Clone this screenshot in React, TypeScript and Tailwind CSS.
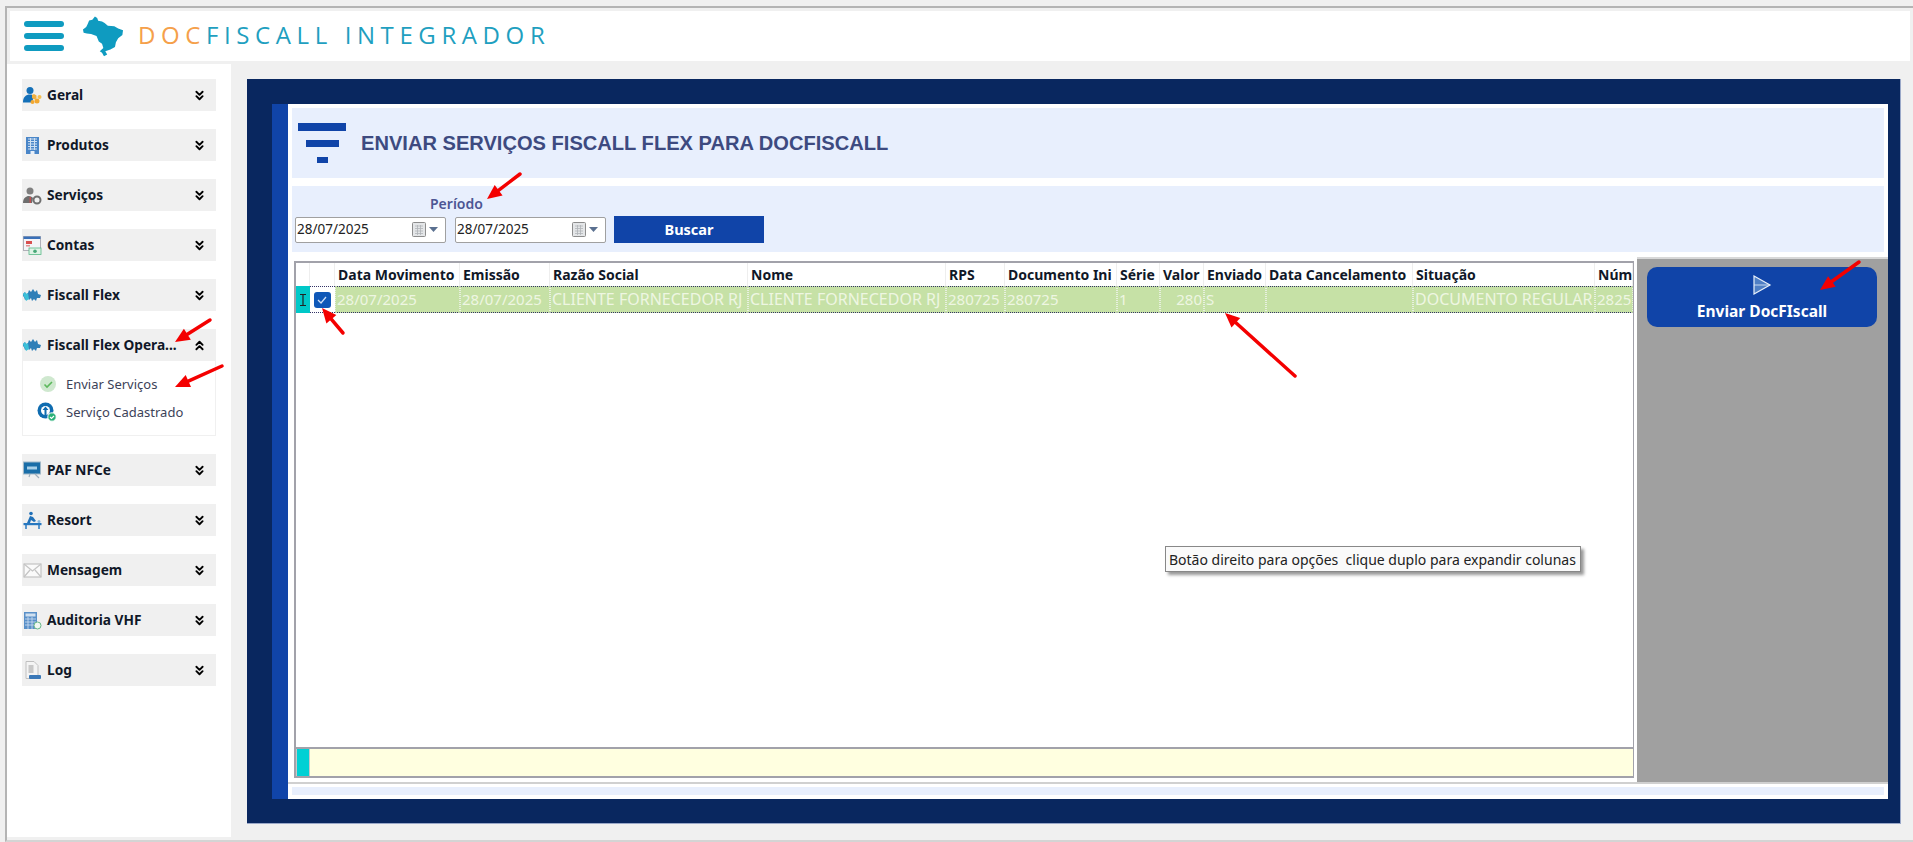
import { ChevronsDown, ChevronsUp } from "lucide-react";
import type { ReactNode } from "react";

const labelFont = "font-['Noto_Sans',sans-serif]";

function GeralIcon() {
  return (
    <svg width="19" height="19" viewBox="0 0 19 19">
      <circle cx="7" cy="4.5" r="3.5" fill="#1470b8" />
      <path d="M0 16c0-5 3-7.5 7-7.5 2 0 3 .5 4 1.5l-2 6.500H0z" fill="#1470b8" />
      <path d="M11 8l2.500 1.500v3l-2.500 1-2-1.500 0-3z" fill="#f0b040" />
      <circle cx="14" cy="15" r="2.500" fill="#f2a830" />
      <circle cx="9.500" cy="16" r="2" fill="#f2a830" />
      <circle cx="16.500" cy="11" r="2" fill="#f6c050" />
    </svg>
  );
}

function ProdutosIcon() {
  return (
    <svg width="19" height="19" viewBox="0 0 19 19">
      <rect x="3" y="1" width="13" height="17" fill="#4a86c8" />
      <path d="M5 3h9M5 5.500h9M5 8h9M5 10.500h9M5 13h9M7.500 2v12M11.500 2v12" stroke="#cfe0f2" strokeWidth="1" />
      <rect x="7.500" y="15" width="4" height="3" fill="#e8f0fa" />
    </svg>
  );
}

function ServicosIcon() {
  return (
    <svg width="19" height="19" viewBox="0 0 19 19">
      <circle cx="7" cy="5" r="3.500" fill="#808080" />
      <path d="M0 17c0-5 3-7 6-7 2 0 3 1 4 2l-1 5H0z" fill="#6e6e6e" />
      <rect x="6.500" y="11" width="1.500" height="6" fill="#c05050" />
      <circle cx="14" cy="14" r="3.500" fill="none" stroke="#707070" strokeWidth="2" />
    </svg>
  );
}

function ContasIcon() {
  return (
    <svg width="19" height="19" viewBox="0 0 19 19">
      <rect x="0.500" y="0.500" width="17" height="14" fill="#f4f4f8" stroke="#b0b0b8" />
      <rect x="0.500" y="0.500" width="17" height="2.500" fill="#3a70b8" />
      <rect x="3" y="5" width="6" height="3" fill="#d85050" />
      <rect x="3" y="9" width="4" height="1.500" fill="#e09090" />
      <rect x="6" y="12" width="12" height="6.500" fill="#dff3e6" stroke="#58b888" strokeWidth="0.800" />
      <circle cx="12" cy="15.200" r="1.800" fill="#48a878" />
    </svg>
  );
}

function PuzzleIcon() {
  return (
    <svg width="19" height="19" viewBox="0 0 19 19">
      <path d="M0 8l2-2 1 2 2-1 1-3 2 2 2-3 2 3 2-2 1 4 3 1-1 3-3 0-1 3-2-2-2 2-1-3-2 2-1-2-3 2-1-3-1-1z" fill="#2f7fb8" />
      <path d="M0 8l2-2 1 2 2-1 1 6-3 2-1-3-1-1z" fill="#3cc0d8" />
    </svg>
  );
}

function PafIcon() {
  return (
    <svg width="19" height="19" viewBox="0 0 19 19">
      <rect x="0.500" y="1" width="17" height="12" fill="#1a6ea8" stroke="#a0b8c8" />
      <rect x="4" y="5.500" width="10" height="3" fill="#a8d0e8" />
      <path d="M7 13l-1 3M12 13l4 4" stroke="#a0b0bc" strokeWidth="1.200" />
    </svg>
  );
}

function ResortIcon() {
  return (
    <svg width="19" height="19" viewBox="0 0 19 19">
      <circle cx="8" cy="2.500" r="1.800" fill="#2070b8" />
      <path d="M7 5l3 1 3 4-2 1-3-2-1 3H4z" fill="#2070b8" />
      <rect x="0.500" y="12" width="18" height="2.200" fill="#2878c0" />
      <path d="M3 14v4M16 14v4" stroke="#2878c0" strokeWidth="1.500" />
      <circle cx="16" cy="10.500" r="1.500" fill="#88b8e0" />
    </svg>
  );
}

function MensagemIcon() {
  return (
    <svg width="19" height="19" viewBox="0 0 19 19">
      <rect x="1" y="3" width="17" height="13" fill="#fafafa" stroke="#c4c4c4" strokeWidth="1.200" />
      <path d="M1 3l8.500 7L18 3M1 16l6-7M18 16l-6-7" fill="none" stroke="#c4c4c4" strokeWidth="1.200" />
    </svg>
  );
}

function AuditoriaIcon() {
  return (
    <svg width="19" height="19" viewBox="0 0 19 19">
      <rect x="1" y="1" width="13" height="17" fill="#5a90c8" />
      <rect x="2.500" y="2.500" width="10" height="3" fill="#d0e0f0" />
      <path d="M2 8h11M2 11h11M2 14h11M5 6v12M9 6v12" stroke="#cfe0f2" strokeWidth="0.800" />
      <circle cx="14.500" cy="14.500" r="3.500" fill="#f0f8f2" stroke="#68b888" strokeWidth="1" />
    </svg>
  );
}

function LogIcon() {
  return (
    <svg width="19" height="19" viewBox="0 0 19 19">
      <path d="M3 0.500h8l4 4v13H3z" fill="#f4f4f4" stroke="#c0c0c0" />
      <path d="M5.500 4h5v8h-5z" fill="#c8c8c8" />
      <rect x="6" y="14" width="12" height="4" rx="1" fill="#3a78b8" />
    </svg>
  );
}

function MenuItem({ icon, label, open }: { icon: ReactNode; label: string; open?: boolean }) {
  return (
    <div className="flex h-[32px] items-center bg-[#f0f0f0] pl-px pr-[9px]">
      <span className="flex w-[24px] shrink-0 items-center">{icon}</span>
      <span className={`${labelFont} flex-1 whitespace-nowrap text-[13.700px] font-bold text-[#101828]`}>{label}</span>
      {open ? (
        <ChevronsUp size={15} strokeWidth={3} className="text-black" />
      ) : (
        <ChevronsDown size={15} strokeWidth={3} className="text-black" />
      )}
    </div>
  );
}

function DateInput() {
  return (
    <div className="flex h-[26px] w-[151px] items-center rounded-[2px] border border-[#a0a0a0] bg-white pl-px pr-[7px]">
      <span className={`${labelFont} flex-1 text-[13.500px] text-[#222]`}>28/07/2025</span>
      <svg width="15" height="16" viewBox="0 0 15 16">
        <rect x="0.500" y="0.500" width="13" height="14" rx="1" fill="#e4e6e8" stroke="#8c8c8c" />
        <path d="M3 4h8M3 6.500h8M3 9h8M3 11.500h8M5.500 3v10M8.500 3v10" stroke="#b0b4b8" strokeWidth="0.800" />
      </svg>
      <svg width="9" height="5" viewBox="0 0 9 5" className="ml-[2px]">
        <path d="M0 0h9L4.500 5z" fill="#5a7090" />
      </svg>
    </div>
  );
}

function Arrow({ x1, y1, x2, y2 }: { x1: number; y1: number; x2: number; y2: number }) {
  const a = Math.atan2(y2 - y1, x2 - x1);
  const len = 16;
  const spread = 0.42;
  const midX = x2 - Math.cos(a) * len * 0.8;
  const midY = y2 - Math.sin(a) * len * 0.8;
  const p1 = `${x2 - Math.cos(a - spread) * len},${y2 - Math.sin(a - spread) * len}`;
  const p2 = `${x2 - Math.cos(a + spread) * len},${y2 - Math.sin(a + spread) * len}`;
  return (
    <g>
      <line x1={x1} y1={y1} x2={midX} y2={midY} stroke="#f40000" strokeWidth="3.500" strokeLinecap="round" />
      <polygon points={`${x2},${y2} ${p1} ${p2}`} fill="#f40000" />
    </g>
  );
}

const columns = [
  { title: "Data Movimento", value: "28/07/2025", size: "text-[15px]" },
  { title: "Emissão", value: "28/07/2025", size: "text-[15px]" },
  { title: "Razão Social", value: "CLIENTE FORNECEDOR RJ", size: "text-[16px]" },
  { title: "Nome", value: "CLIENTE FORNECEDOR RJ", size: "text-[16px]" },
  { title: "RPS", value: "280725", size: "text-[15px]" },
  { title: "Documento Ini", value: "280725", size: "text-[15px]" },
  { title: "Série", value: "1", size: "text-[15px]" },
  { title: "Valor", value: "280", size: "text-[15px]", right: true },
  { title: "Enviado", value: "S", size: "text-[15px]" },
  { title: "Data Cancelamento", value: "", size: "text-[15px]" },
  { title: "Situação", value: "DOCUMENTO REGULAR", size: "text-[16px]" },
  { title: "Número", value: "2825", size: "text-[15px]" },
];

const gridCols = "grid-cols-[14px_25px_125px_90px_198px_198px_59px_112px_43px_44px_62px_147px_182px_38px]";

export default function App() {
  return (
    <div className="relative h-[842px] w-[1913px] overflow-hidden bg-[#f0f0f0]">
      <div className="ml-[5px] mt-[6px] flex h-[836px] flex-col border-b-2 border-l-2 border-t-2 border-b-[#d4d4d4] border-l-[#b4b4b4] border-t-[#b4b4b4]">
        {/* Header */}
        <header className="ml-[3px] mr-[3px] mt-[3px] flex h-[50px] items-center bg-white pl-[14px]">
          <div className="flex w-[40px] flex-col gap-[6px]">
            <div className="h-[6px] rounded-full bg-[#0f9bc0]" />
            <div className="h-[6px] rounded-full bg-[#0f9bc0]" />
            <div className="h-[6px] rounded-full bg-[#0f9bc0]" />
          </div>
          <svg width="42" height="42" viewBox="200 14 130 128" className="ml-[18px]">
            <path
              d="M203 58L213 50L218 40L222 30L232 28L240 18L247 22L250 31L262 33L270 38L280 46L300 48L312 55L327 60L325 75L312 85L305 97L302 112L288 120L272 125L278 135L268 141L262 130L255 125L266 115L262 102L252 95L245 78L228 72L215 70L205 68Z"
              fill="#0f9bc0"
            />
          </svg>
          <div className="-mt-[3px] ml-[14px] whitespace-nowrap font-['Open_Sans',sans-serif] text-[24px] font-medium tracking-[5.600px] text-[#1f9fc0]">
            <span className="text-[#f5a04a]">DOC</span>FISCALL INTEGRADOR
          </div>
        </header>

        <div className="mb-[3px] mt-[3px] flex flex-1">
          {/* Sidebar */}
          <aside className="flex w-[224px] shrink-0 flex-col bg-white pl-[15px] pr-[15px] pt-[15px]">
            <div className="flex flex-col gap-[18px]">
              <MenuItem icon={<GeralIcon />} label="Geral" />
              <MenuItem icon={<ProdutosIcon />} label="Produtos" />
              <MenuItem icon={<ServicosIcon />} label="Serviços" />
              <MenuItem icon={<ContasIcon />} label="Contas" />
              <MenuItem icon={<PuzzleIcon />} label="Fiscall Flex" />
              <div>
                <MenuItem icon={<PuzzleIcon />} label="Fiscall Flex Opera..." open />
                <div className="flex h-[75px] flex-col gap-[8px] border border-t-0 border-[#f0f0f0] pl-[16px] pt-[14px]">
                  <div className="flex h-[20px] items-center">
                    <svg width="18" height="18" viewBox="0 0 18 18" className="-mt-[2px]">
                      <circle cx="9" cy="9" r="8" fill="#cfe8cf" />
                      <path d="M5.500 9.500l2.500 2.500 5-5" fill="none" stroke="#5cb85c" strokeWidth="1.600" />
                    </svg>
                    <span className={`${labelFont} ml-[9px] text-[13px] text-[#3c4258]`}>Enviar Serviços</span>
                  </div>
                  <div className="-ml-[2px] flex h-[20px] items-center">
                    <svg width="20" height="20" viewBox="0 0 20 20" className="-mt-[3px]">
                      <circle cx="8.500" cy="8.500" r="8" fill="#0f6cb0" />
                      <circle cx="8.500" cy="8.500" r="4.500" fill="white" />
                      <path d="M8.500 4.500l3 3.500h-2v5h-2V8h-2z" fill="#0f6cb0" />
                      <circle cx="15" cy="15" r="4.200" fill="#28b078" stroke="white" />
                      <path d="M13 15l1.500 1.500 2.500-2.500" fill="none" stroke="white" strokeWidth="1.100" />
                    </svg>
                    <span className={`${labelFont} ml-[9px] text-[13px] text-[#3c4258]`}>Serviço Cadastrado</span>
                  </div>
                </div>
              </div>
              <MenuItem icon={<PafIcon />} label="PAF NFCe" />
              <MenuItem icon={<ResortIcon />} label="Resort" />
              <MenuItem icon={<MensagemIcon />} label="Mensagem" />
              <MenuItem icon={<AuditoriaIcon />} label="Auditoria VHF" />
              <MenuItem icon={<LogIcon />} label="Log" />
            </div>
          </aside>

          {/* Main */}
          <main className="min-w-0 flex-1 pl-[16px] pr-[12px] pt-[15px]">
            <div className="flex h-[745px] border-b border-r border-[#9aa8c8] bg-[#09275f] pb-[24px] pl-[25px] pr-[12px] pt-[25px]">
              <div className="w-[16px] shrink-0 bg-[#1044a8]" />
              <div className="flex min-w-0 flex-1 flex-col bg-white pl-[4px] pr-[4px] pt-[4px]">
                <div className="flex h-[70px] items-center bg-[#e8effd] pl-[6px]">
                  <svg width="48" height="40" viewBox="0 0 48 40">
                    <rect x="0" y="0" width="48" height="8" fill="#1044a8" />
                    <rect x="8" y="17" width="33" height="7" fill="#1044a8" />
                    <rect x="19" y="34" width="11" height="6" fill="#1044a8" />
                  </svg>
                  <h1 className="ml-[15px] font-['Liberation_Sans',sans-serif] text-[20.100px] font-bold text-[#3d4a80]">
                    ENVIAR SERVIÇOS FISCALL FLEX PARA DOCFISCALL
                  </h1>
                </div>

                <div className="mt-[8px] h-[66px] bg-[#e8effd] pl-[3px] pt-[9px]">
                  <div className={`${labelFont} ml-[135px] h-[21px] text-[14px] font-semibold leading-[18px] text-[#4c5694]`}>
                    Período
                  </div>
                  <div className="flex items-center">
                    <DateInput />
                    <div className="ml-[9px]">
                      <DateInput />
                    </div>
                    <button className={`${labelFont} ml-[8px] h-[27px] w-[150px] bg-[#1044a8] text-[14.500px] font-bold text-white`}>
                      Buscar
                    </button>
                  </div>
                </div>

                <div className="-mr-[4px] mt-[5px] flex h-[525px]">
                  <div className="relative min-w-0 flex-1 pl-[2px] pr-[3px] pt-[4px]">
                    {/* Grid */}
                    <div className="flex h-[517px] flex-col border-y-2 border-l-2 border-r border-[#a2a2aa] bg-white">
                      <div className={`grid h-[23px] shrink-0 ${gridCols}`}>
                        <div className="border-r border-[#eeeeee]" />
                        <div className="border-r border-[#eeeeee]" />
                        {columns.map((c) => (
                          <div
                            key={c.title}
                            className={`${labelFont} overflow-hidden whitespace-nowrap border-r border-[#eeeeee] pl-[3px] text-[14px] font-bold leading-[24px] text-[#101828]`}
                          >
                            {c.title}
                          </div>
                        ))}
                      </div>
                      <div className={`grid h-[27px] shrink-0 ${gridCols}`}>
                        <div className="flex items-center justify-center bg-[#00c8c8]">
                          <svg width="8" height="12" viewBox="0 0 8 12">
                            <path d="M1 .500h6M1 11.500h6M4 .500v11" stroke="#222" strokeWidth="1.200" fill="none" />
                          </svg>
                        </div>
                        <div className="flex items-center justify-center border-y border-dotted border-[#333366] pr-[1px]">
                          <div className="flex h-[16px] w-[17px] items-center justify-center rounded-[3px] bg-[#0f58b8]">
                            <svg width="10" height="8" viewBox="0 0 10 8">
                              <path d="M1 4l3 3 5-6" fill="none" stroke="#cfe0f8" strokeWidth="1.300" />
                            </svg>
                          </div>
                        </div>
                        {columns.map((c) => (
                          <div
                            key={c.title}
                            className={`${labelFont} overflow-hidden whitespace-nowrap border-x border-y border-dotted border-x-[#e8f0e0] border-y-[#333366] bg-[#c6e1a6] px-px ${c.size} leading-[24px] text-[#eef6e2] ${c.right ? "text-right" : "text-left"}`}
                          >
                            {c.value}
                          </div>
                        ))}
                      </div>
                      <div className="flex-1" />
                      <div className="flex h-[29px] shrink-0 border-t-2 border-[#a2a2aa] bg-[#ffffe0]">
                        <div className="h-full w-[14px] border-x border-[#c8c8c8] bg-[#00d0d4]" />
                      </div>
                    </div>

                    <div
                      className={`${labelFont} absolute left-[873px] top-[289px] flex h-[26px] w-[416px] items-center whitespace-nowrap border border-[#888] bg-[#fafafa] pl-[3px] text-[14px] text-[#222] shadow-[3px_3px_3px_#999]`}
                    >
                      Botão direito para opções&nbsp; clique duplo para expandir colunas
                    </div>
                  </div>

                  <div className="w-[251px] shrink-0 border-t-2 border-[#d8d8d8] bg-[#a0a0a0] px-[10px] pt-[8px]">
                    <button className="flex h-[60px] w-[230px] flex-col items-center rounded-[10px] bg-[#1044a8] pt-[8px]">
                      <svg width="20" height="20" viewBox="0 0 20 20">
                        <path d="M2 1l16 9-16 9z" fill="#4f7fc4" stroke="#e8f0fa" strokeWidth="1.200" />
                        <path d="M2 10h16" stroke="#e8f0fa" strokeWidth="0.800" />
                      </svg>
                      <span className={`${labelFont} mt-[5px] text-[15.500px] font-bold leading-[22px] text-white`}>Enviar DocFIscall</span>
                    </button>
                  </div>
                </div>

                <div className="-mx-[4px] border-t-2 border-[#d0d0d0] px-[4px] pt-[3px]">
                  <div className="h-[8px] bg-[#e8effd]" />
                </div>
              </div>
            </div>
          </main>
        </div>
      </div>

      {/* Red annotation arrows */}
      <svg width="1913" height="842" className="pointer-events-none absolute left-0 top-0">
        <Arrow x1={520} y1={174} x2={487} y2={199} />
        <Arrow x1={343} y1={333} x2={322} y2={308} />
        <Arrow x1={210} y1={320} x2={175} y2={342} />
        <Arrow x1={222} y1={366} x2={175} y2={387} />
        <Arrow x1={1295} y1={376} x2={1225} y2={313} />
        <Arrow x1={1859} y1={262} x2={1820} y2={290} />
      </svg>
    </div>
  );
}
